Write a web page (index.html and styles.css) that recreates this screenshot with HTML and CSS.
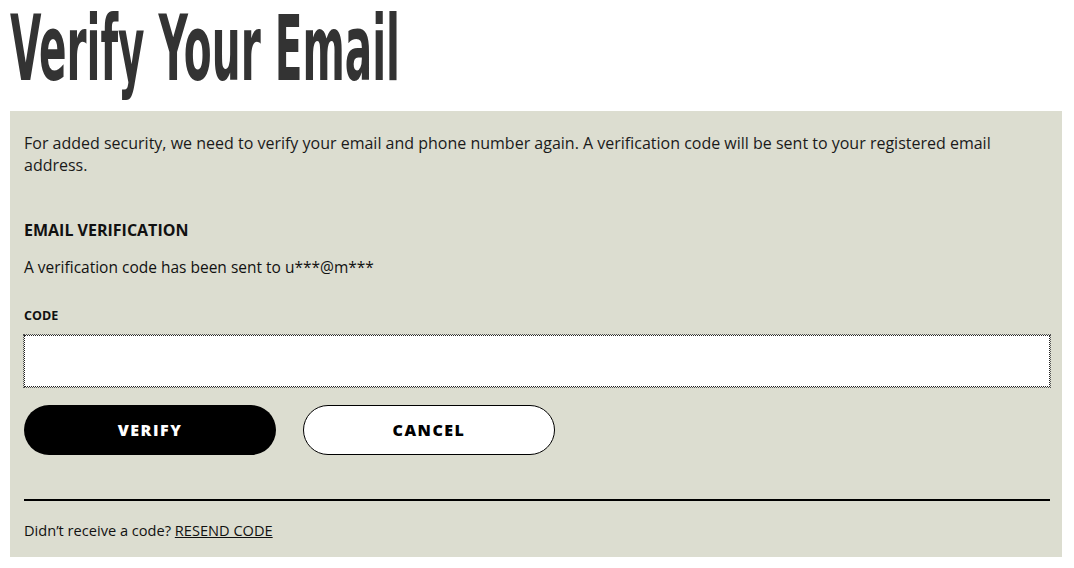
FILE: index.html
```html
<!DOCTYPE html>
<html>
<head>
<meta charset="utf-8">
<link rel="stylesheet" href="styles.css">
</head>
<body>
<h1 class="title"><svg class="title-svg" width="440" height="111" viewBox="0 0 440 111"><text class="title-text" x="0" y="80" textLength="390" lengthAdjust="spacingAndGlyphs">Verify Your Email</text></svg></h1>
<section class="panel">
  <p class="intro">For added security, we need to verify your email and phone number again. A verification code will be sent to your registered email address.</p>
  <h2 class="section-title">EMAIL VERIFICATION</h2>
  <p class="sent">A verification code has been sent to u***@m***</p>
  <label class="field-label" for="code">CODE</label>
  <input class="code-input" id="code" type="text">
  <div class="actions">
    <button class="btn btn-primary">VERIFY</button>
    <button class="btn btn-secondary">CANCEL</button>
  </div>
  <hr class="divider">
  <p class="resend">Didn’t receive a code? <a class="resend-link" href="#">RESEND CODE</a></p>
</section>
</body>
</html>
```
FILE: styles.css
```css
html, body { margin: 0; padding: 0; background: #fff; }
body { padding: 0 12px 0 10px; font-family: "Open Sans", "Liberation Sans", sans-serif; color: #111; }
.title { margin: 0; height: 111px; line-height: 0; }
.title-svg { display: block; overflow: visible; }
.title-text { font-family: "DejaVu Sans Condensed", "DejaVu Sans", sans-serif; font-weight: bold; font-size: 91px; fill: #333; }
.panel { background: #dcddd0; padding: 21px 12px 18px 14px; display: flex; flex-direction: column; }
.intro { margin: 0; font-size: 16px; line-height: 22px; color: #1a1a1a; }
.section-title { margin: 43px 0 0; font-size: 16px; font-weight: bold; line-height: 22px; color: #111; }
.sent { margin: 15px 0 0; font-size: 15.5px; line-height: 22px; }
.field-label { margin-top: 30px; font-size: 12.5px; font-weight: bold; line-height: 16px; }
.code-input { margin-top: 11px; height: 52px; box-sizing: border-box; border: 1px dotted #222; outline: 1px dotted #555; background: #fff; }
.actions { display: flex; gap: 27px; margin-top: 18px; }
.btn { width: 252px; height: 50px; border-radius: 25px; font-family: "Open Sans", sans-serif; font-weight: 800; font-size: 16px; letter-spacing: 1.5px; cursor: pointer; }
.btn-primary { background: #000; color: #fff; border: none; }
.btn-secondary { background: #fff; color: #000; border: 1px solid #000; }
.divider { margin: 44px 0 0; border: none; border-top: 2px solid #000; }
.resend { margin: 20px 0 0; font-size: 14.6px; line-height: 18px; }
.resend-link { color: #111; }
```
